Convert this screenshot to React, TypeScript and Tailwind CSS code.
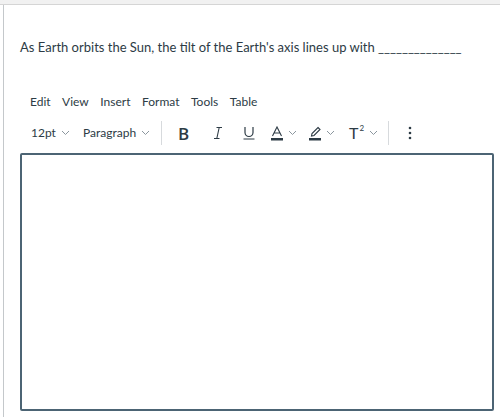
import React from 'react';

const Chevron = () => (
  <svg width="9" height="6" viewBox="0 0 9 6" className="ml-[5px]">
    <path d="M1 1 L4.5 4.5 L8 1" fill="none" stroke="#8b969e" strokeWidth="1" />
  </svg>
);

const Sep = () => <div className="w-px h-[24px] bg-[#d7dadd]" />;

export default function App() {
  return (
    <div className="w-[500px] h-[417px] bg-white overflow-hidden" style={{ fontFamily: 'Lato, "Open Sans", sans-serif' }}>
      <div className="h-[5px] bg-[#f1f1f1] border-b border-[#d5d5d5]" />
      <div className="ml-[3px] h-[412px] border-l border-[#c4c8cb] pl-[16px] pr-[5px] text-[#2d3b45]">
        {/* Question */}
        <p className="pt-[33px] text-[13px] leading-[18px]">
          As Earth orbits the Sun, the tilt of the Earth's axis lines up with ______________
        </p>

        {/* Menu bar */}
        <div className="mt-[36px] flex items-center h-[20px] pl-[10px] gap-[11.5px] text-[12px] text-[#2d3b45]">
          <span>Edit</span>
          <span>View</span>
          <span>Insert</span>
          <span>Format</span>
          <span>Tools</span>
          <span>Table</span>
        </div>

        {/* Toolbar */}
        <div className="mt-[9px] flex items-center h-[24px] text-[12px]">
          <div className="flex items-center pl-[11px] w-[63px]">
            <span>12pt</span>
            <Chevron />
          </div>
          <div className="flex items-center w-[78px]">
            <span>Paragraph</span>
            <Chevron />
          </div>
          <Sep />
          <div className="flex items-center ml-[16px]">
            <span className="text-[17px] font-semibold leading-none w-[35px]" style={{ fontFamily: '"Open Sans", sans-serif' }}>B</span>
            <svg width="10" height="14" viewBox="0 0 10 14">
              <path d="M3.5 1.5 H9 M1 12.5 H6.5 M6.2 1.5 L3.8 12.5" stroke="#2d3b45" strokeWidth="1.1" fill="none" />
            </svg>
            <svg width="12" height="14" viewBox="0 0 12 14" className="ml-[20px]">
              <path d="M2 1 V6.5 A4 4 0 0 0 10 6.5 V1" stroke="#2d3b45" strokeWidth="1.2" fill="none" />
              <path d="M0.5 13 H11.5" stroke="#2d3b45" strokeWidth="1" />
            </svg>
            <div className="flex items-center ml-[16px]">
              <svg width="12" height="15" viewBox="0 0 12 15">
                <path d="M1.5 10 L6 1 L10.5 10 M3 7 H9" stroke="#2d3b45" strokeWidth="1.1" fill="none" />
                <rect x="0" y="12" width="12" height="2.5" fill="#2d3b45" />
              </svg>
              <Chevron />
            </div>
            <div className="flex items-center ml-[12px]">
              <svg width="12" height="15" viewBox="0 0 12 15">
                <path d="M9 1.5 L11 3.5 L5 9.5 L2.5 10 L3 7.5 Z" stroke="#2d3b45" strokeWidth="1.1" fill="none" />
                <rect x="0" y="12" width="12" height="2.5" fill="#2d3b45" />
              </svg>
              <Chevron />
            </div>
            <div className="flex items-center ml-[14px]">
              <span className="flex items-start text-[16px] leading-none text-[#2d3b45]">
                T<span className="text-[8px] leading-none ml-[1px] -mt-[1px]">2</span>
              </span>
              <Chevron />
            </div>
          </div>
          <div className="ml-[10px]"><Sep /></div>
          <svg width="4" height="14" viewBox="0 0 4 14" className="ml-[19px]">
            <circle cx="2" cy="2" r="1.3" fill="#2d3b45" />
            <circle cx="2" cy="7" r="1.3" fill="#2d3b45" />
            <circle cx="2" cy="12" r="1.3" fill="#2d3b45" />
          </svg>
        </div>

        {/* Editor area */}
        <div className="mt-[8px] h-[258px] w-[474px] border-2 border-[#4c6474] rounded-[2px] bg-white" />
      </div>
    </div>
  );
}
